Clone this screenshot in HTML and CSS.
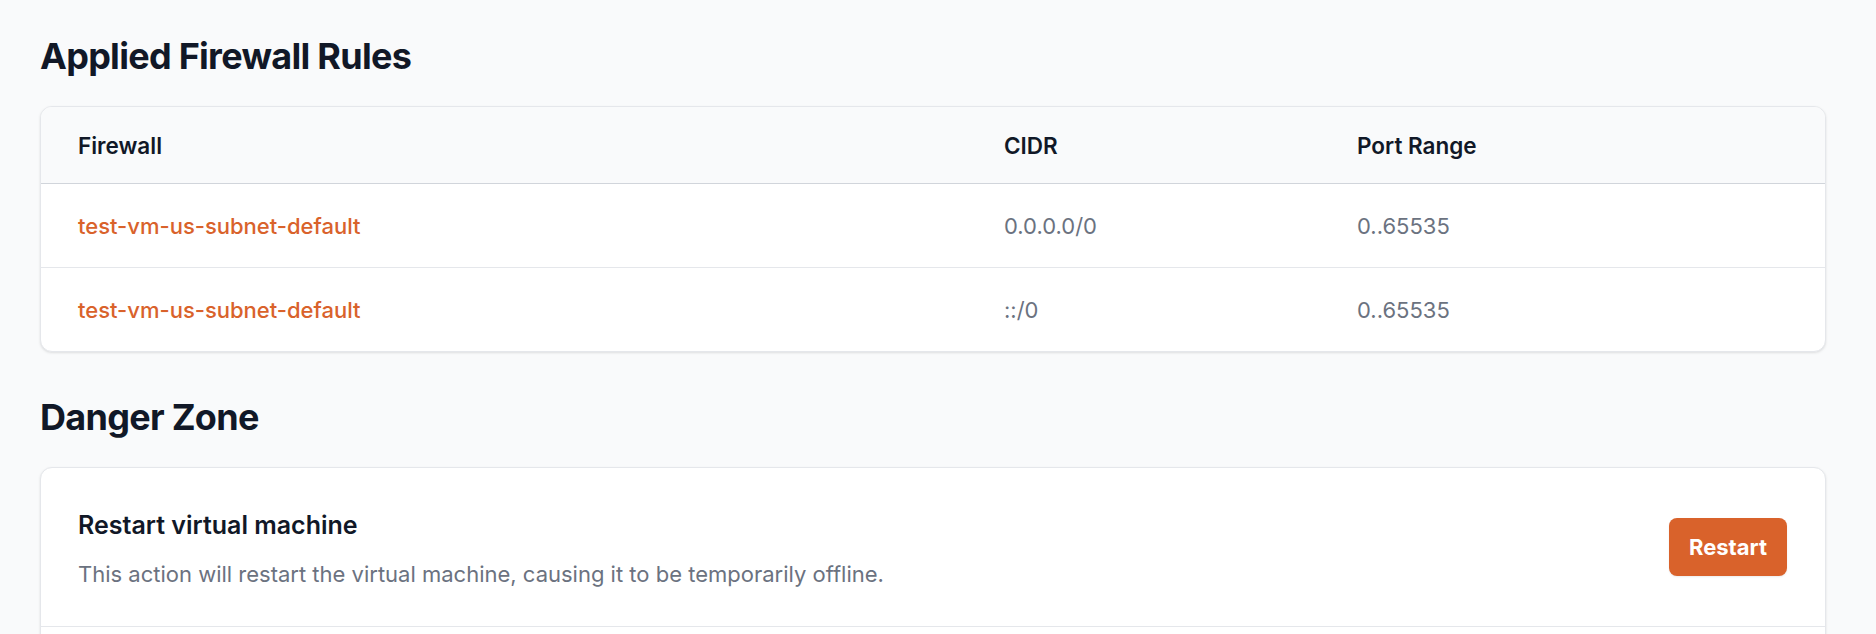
FILE: index.html
```html
<!DOCTYPE html>
<html lang="en">
<head>
<meta charset="utf-8">
<title>VM details</title>
<link rel="stylesheet" href="styles.css">
</head>
<body>
<main class="page">
  <section class="section">
    <h2 class="section-title">Applied Firewall Rules</h2>
    <div class="card">
      <table class="rules">
        <colgroup>
          <col class="col-fw">
          <col class="col-cidr">
          <col class="col-port">
        </colgroup>
        <thead>
          <tr><th>Firewall</th><th>CIDR</th><th>Port Range</th></tr>
        </thead>
        <tbody>
          <tr>
            <td><a class="link" href="#">test-vm-us-subnet-default</a></td>
            <td class="muted">0.0.0.0/0</td>
            <td class="muted">0..65535</td>
          </tr>
          <tr>
            <td><a class="link" href="#">test-vm-us-subnet-default</a></td>
            <td class="muted">::/0</td>
            <td class="muted">0..65535</td>
          </tr>
        </tbody>
      </table>
    </div>
  </section>
  <section class="section">
    <h2 class="section-title">Danger Zone</h2>
    <div class="card card-danger">
      <div class="danger-row">
        <div class="danger-text">
          <h3 class="danger-title">Restart virtual machine</h3>
          <p class="danger-desc">This action will restart the virtual machine, causing it to be temporarily offline.</p>
        </div>
        <button class="btn" type="button">Restart</button>
      </div>
    </div>
  </section>
</main>
</body>
</html>
```

FILE: styles.css
```css
html, body {
  margin: 0;
  padding: 0;
  height: 100%;
  overflow: hidden;
}

body {
  background: #f9fafb;
  font-family: "Inter", "Liberation Sans", sans-serif;
  color: #111827;
}

.page {
  padding: 36px 50px 0 40px;
  display: flex;
  flex-direction: column;
  gap: 45px;
}

.section {
  display: flex;
  flex-direction: column;
  gap: 30px;
}

.section-title {
  margin: 0;
  font-size: 36px;
  line-height: 40px;
  font-weight: 700;
  letter-spacing: -0.02em;
  color: #111827;
}

.card {
  background: #ffffff;
  border: 1px solid #e5e7eb;
  border-radius: 12px;
  box-shadow: 0 1px 3px rgba(0, 0, 0, 0.08), 0 1px 2px rgba(0, 0, 0, 0.04);
  overflow: hidden;
}

.card-danger {
  padding-bottom: 60px;
}

.rules {
  width: 100%;
  border-collapse: collapse;
  table-layout: fixed;
}

.col-fw { width: 926px; }
.col-cidr { width: 353px; }

.rules th {
  background: #f9fafb;
  height: 76px;
  padding: 0 37px;
  text-align: left;
  font-size: 22.5px;
  font-weight: 600;
  color: #111827;
  border-bottom: 1px solid #d1d5db;
}

.rules td {
  height: 83px;
  padding: 0 37px;
  font-size: 22px;
  color: #111827;
  border-bottom: 1px solid #e5e7eb;
}

.rules tbody tr:last-child td {
  border-bottom: none;
}

.rules .muted {
  color: #6b7280;
}

.link {
  color: #d9622b;
  font-weight: 500;
  text-decoration: none;
}

.danger-row {
  display: flex;
  align-items: center;
  justify-content: space-between;
  height: 158px;
  padding: 0 38px 0 37px;
  border-bottom: 1px solid #e5e7eb;
}

.danger-text {
  display: flex;
  flex-direction: column;
  gap: 21px;
  padding-top: 4px;
}

.danger-title {
  margin: 0;
  font-size: 25px;
  line-height: 28px;
  font-weight: 600;
  color: #111827;
}

.danger-desc {
  margin: 0;
  font-size: 22px;
  line-height: 28px;
  color: #6b7280;
}

.btn {
  width: 118px;
  height: 58px;
  border: none;
  border-radius: 8px;
  background: #d9622b;
  color: #ffffff;
  font-family: inherit;
  font-size: 22px;
  font-weight: 700;
  box-shadow: 0 1px 2px rgba(0, 0, 0, 0.08);
  cursor: pointer;
}
```
